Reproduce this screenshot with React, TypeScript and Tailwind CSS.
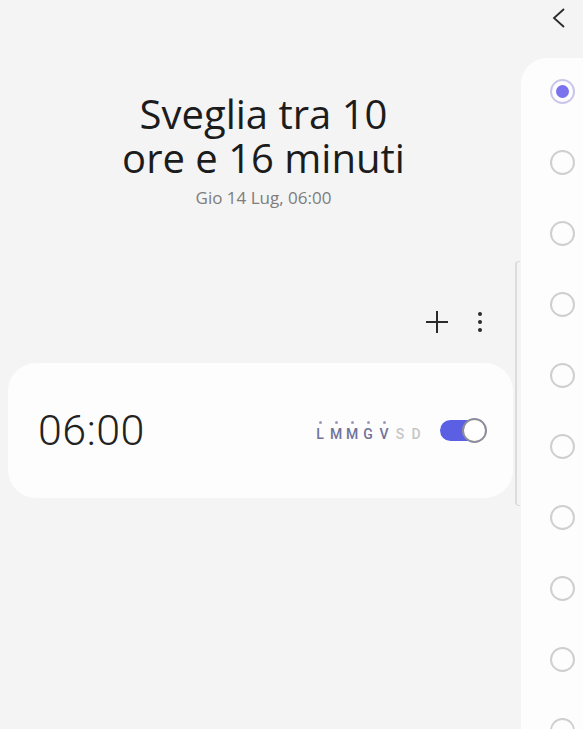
import React from "react";

const days = [
  { d: "L", on: true },
  { d: "M", on: true },
  { d: "M", on: true },
  { d: "G", on: true },
  { d: "V", on: true },
  { d: "S", on: false },
  { d: "D", on: false },
];

const Radio = ({ checked = false }: { checked?: boolean }) => {
  if (checked) {
    return (
      <div className="shrink-0 w-[25px] h-[25px] rounded-full border-2 border-[#c9c6ea] flex items-center justify-center">
        <div className="w-[13px] h-[13px] rounded-full bg-[#7b72ee]" />
      </div>
    );
  }
  return <div className="shrink-0 w-[25px] h-[25px] rounded-full border-2 border-[#cfcfcf]" />;
};

const AlarmCard = () => {
  return (
    <div className="mx-2 h-[135px] bg-[#fdfdfd] rounded-[28px] flex items-center justify-between pl-[30px] pr-[26px]">
      <span className="text-[43px] font-light text-[#222] tracking-[0.5px]">06:00</span>
      <div className="flex items-center gap-[16px]">
        <div className="flex">
          {days.map((x, i) => (
            <div key={i} className="w-[16px] flex flex-col items-center">
              <div
                className={`w-[3px] h-[3px] rounded-full mb-[4px] ${x.on ? "bg-[#9a9bb8]" : "bg-transparent"}`}
              />
              <span
                className={`text-[14px] font-medium leading-[13px] ${x.on ? "text-[#70729a]" : "text-[#c6c6c6]"}`}
              >
                {x.d}
              </span>
            </div>
          ))}
        </div>
        <div className="relative w-[47px] h-[25px]">
          <div className="absolute left-0 top-[2px] w-[46px] h-[21px] rounded-full bg-[#5a5fe4]" />
          <div className="absolute right-0 top-0 w-[25px] h-[25px] rounded-full bg-white border-2 border-[#8d8d9a]" />
        </div>
      </div>
    </div>
  );
};

export default function App() {
  return (
    <div
      className="w-[583px] h-[729px] overflow-hidden bg-[#f4f4f4] flex"
      style={{ fontFamily: "Roboto, 'Noto Sans', sans-serif" }}
    >
      <div className="relative w-[521px] flex flex-col">
        <div
          className="pt-[92px] pl-[6px] text-center text-[40px] leading-[44px] text-[#1c1c1c]"
          style={{ fontFamily: "'Open Sans', sans-serif" }}
        >
          Sveglia tra 10
          <br />
          ore e 16 minuti
        </div>
        <div
          className="mt-[5px] pl-[6px] text-center text-[17px] leading-[25px] text-[#7d7d7d]"
          style={{ fontFamily: "'Open Sans', sans-serif" }}
        >
          Gio 14 Lug, 06:00
        </div>
        <div className="mt-[98px] flex justify-end items-center gap-[28px] pr-[38px] h-[28px]">
          <svg width="24" height="24" viewBox="0 0 24 24">
            <path d="M12 1v22M1 12h22" stroke="#2a2a2a" strokeWidth="2" />
          </svg>
          <svg width="6" height="22" viewBox="0 0 6 22">
            <circle cx="3" cy="3" r="2" fill="#2a2a2a" />
            <circle cx="3" cy="11" r="2" fill="#2a2a2a" />
            <circle cx="3" cy="19" r="2" fill="#2a2a2a" />
          </svg>
        </div>
        <div className="mt-[27px]">
          <AlarmCard />
        </div>
        <div className="absolute left-[515px] top-[261px] w-[5px] h-[245px] border-l-2 border-y border-[#dcdcdc] rounded-l-[4px]" />
      </div>
      <div className="flex-1 flex flex-col min-h-0">
        <div className="shrink-0 h-[58px] flex items-start pt-[8px] pl-[31px]">
          <svg width="14" height="20" viewBox="0 0 14 20">
            <path d="M12 1 L2 10 L12 19" fill="none" stroke="#2a2a2a" strokeWidth="1.8" />
          </svg>
        </div>
        <div className="flex-1 bg-[#fdfdfd] rounded-tl-[26px] flex flex-col items-end pr-[8px] pt-[21px] gap-[46px]">
          <Radio checked />
          <Radio />
          <Radio />
          <Radio />
          <Radio />
          <Radio />
          <Radio />
          <Radio />
          <Radio />
          <Radio />
        </div>
      </div>
    </div>
  );
}
